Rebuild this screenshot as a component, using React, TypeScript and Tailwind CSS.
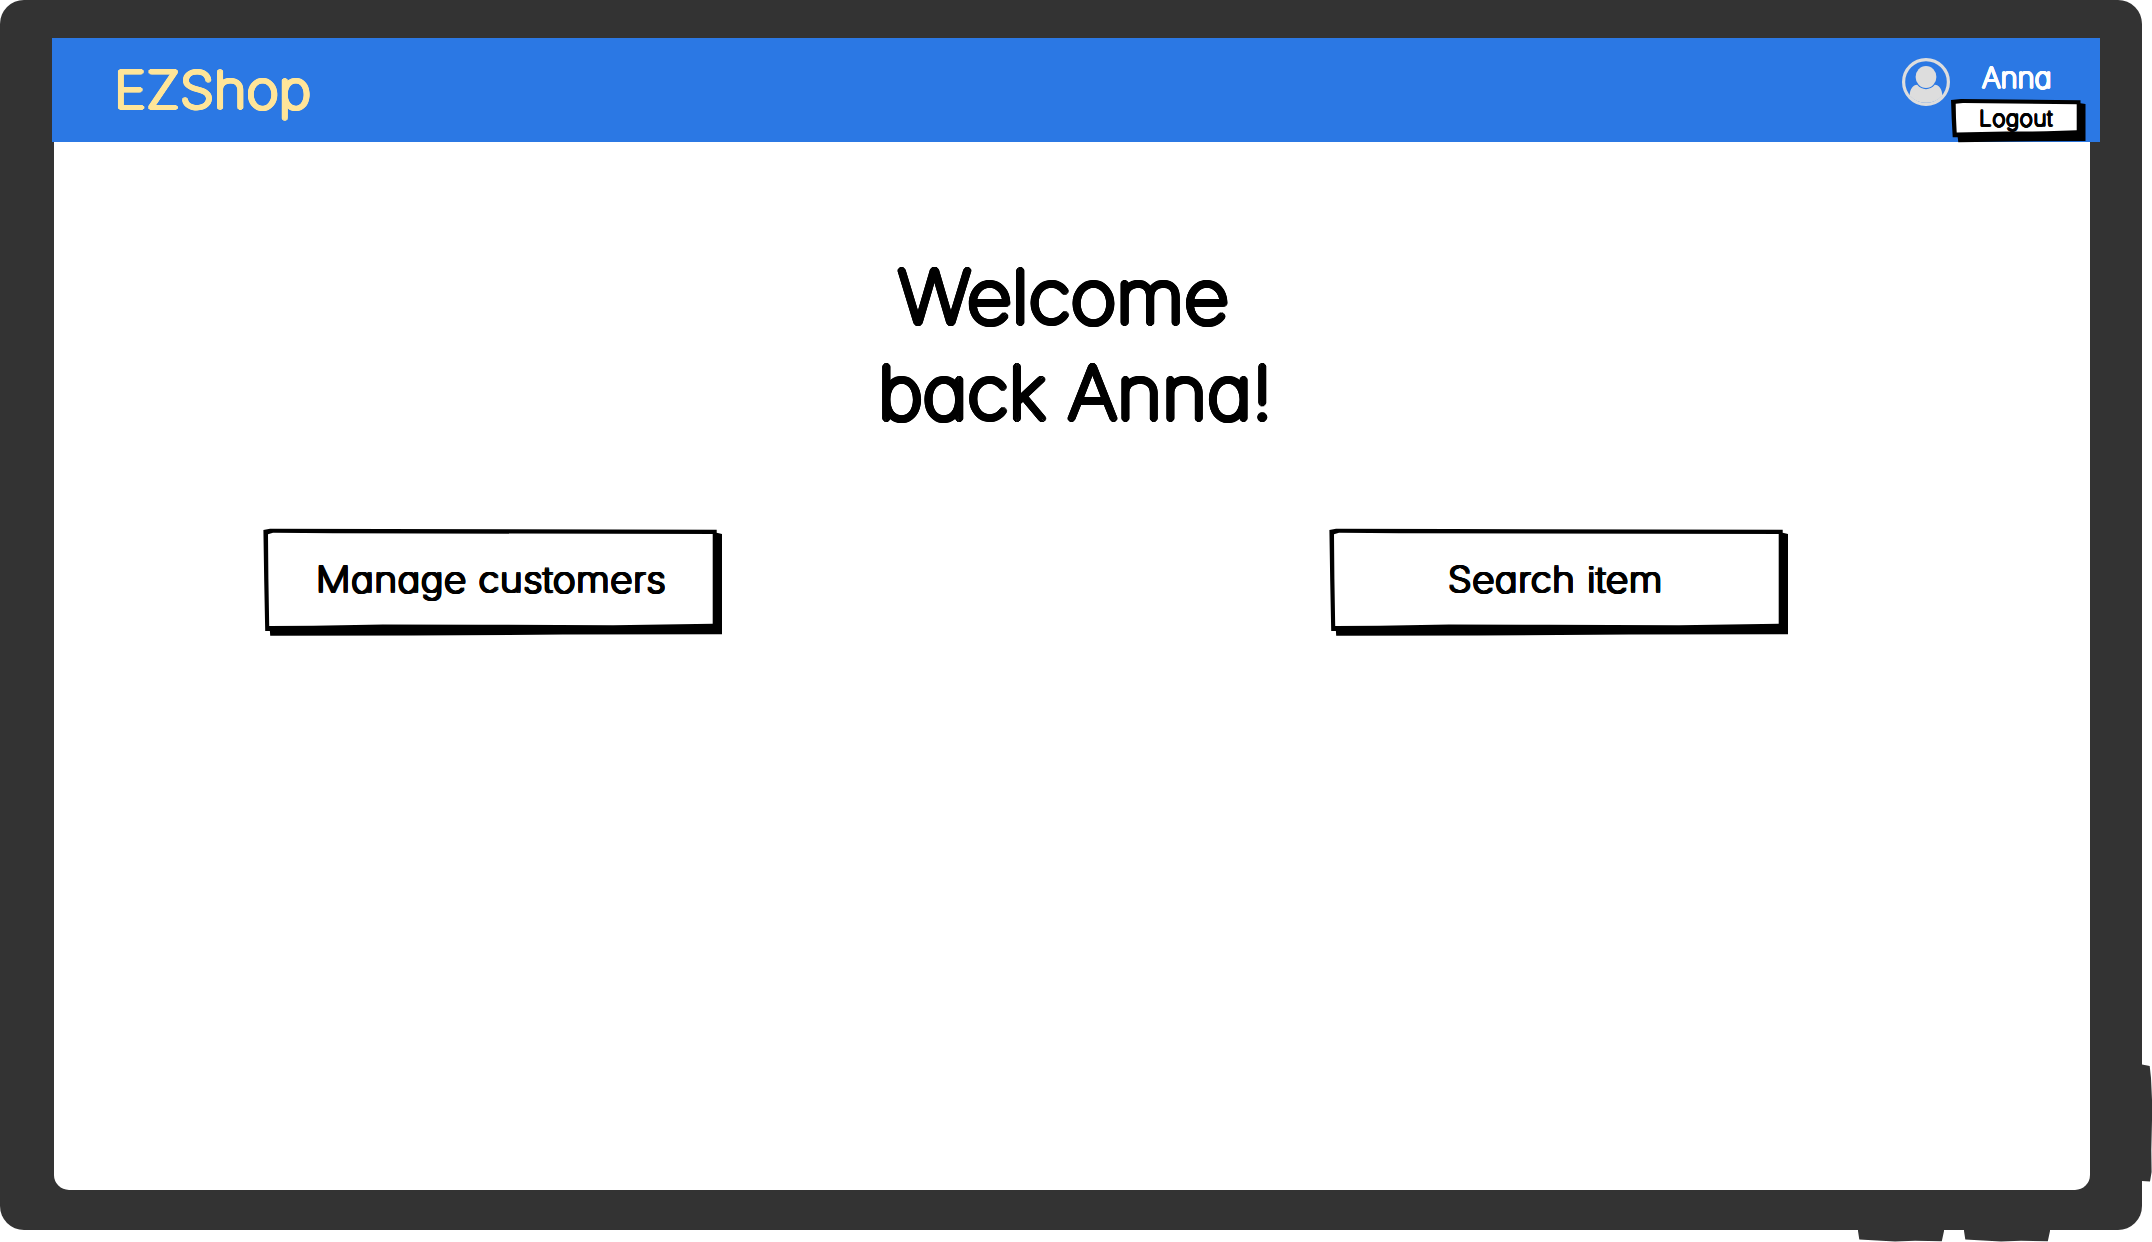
import type { ReactNode } from "react";

function Lettering({ className, children }: { className: string; children: ReactNode }) {
  return (
    <span
      className={
        "relative block origin-left whitespace-pre font-thin [font-feature-settings:'cv11'] [text-shadow:0.041em_0_currentColor,0.038em_0.015em_currentColor,0.029em_0.029em_currentColor,0.015em_0.038em_currentColor,0_0.041em_currentColor,-0.015em_0.038em_currentColor,-0.029em_0.029em_currentColor,-0.038em_0.015em_currentColor,-0.041em_0_currentColor,-0.038em_-0.015em_currentColor,-0.029em_-0.029em_currentColor,-0.015em_-0.038em_currentColor,0_-0.041em_currentColor,0.015em_-0.038em_currentColor,0.029em_-0.029em_currentColor,0.038em_-0.015em_currentColor] " +
        className
      }
    >
      {children}
    </span>
  );
}

function SketchButton({ className, children }: { className: string; children: ReactNode }) {
  return (
    <button className={"relative block h-[107px] w-[459px] text-left " + className}>
      <svg className="absolute inset-0 h-full w-full overflow-visible" viewBox="0 0 459 107">
        <path
          d="M.4 1 7-.2 120 0 453.7.8V3.7L459 5V105.3L300 105.6 150 106.6 7.2 106.8 6.9 102H2.2L1.2 52Z"
          fill="#000"
        />
        <path d="M5 5.2 10 3.7 70 4.3 449.7 5V94.8L350 96.3 220 95.7 120 95.5 50 96.7 6.2 97 5.4 50Z" fill="#fff" />
      </svg>
      {children}
    </button>
  );
}

function Avatar() {
  return (
    <svg className="mt-5 h-12 w-12 shrink-0" viewBox="0 0 48 48">
      <circle cx="24" cy="24" r="22.4" fill="none" stroke="#ddd" strokeWidth="3.2" />
      <ellipse cx="24" cy="19" rx="10.4" ry="11" fill="#ddd" />
      <path
        d="M7.6 37.5C8 31 11 27 15.2 26.8C20 32.6 28 32.6 32.8 26.8C37 27 40 31 40.4 37.5A22 22 0 0 1 7.6 37.5Z"
        fill="#ddd"
      />
    </svg>
  );
}

function Header() {
  return (
    <header className="relative -mr-2.5 -ml-0.5 flex h-[104px] items-start bg-[#2b78e4]">
      <Lettering className="ml-[61.5px] scale-x-[1.1] text-[50px] leading-[104px] tracking-[0.3px] text-[#ffe599]">
        EZShop
      </Lettering>
      <div className="mr-[9px] ml-auto flex">
        <Avatar />
        <div className="ml-[1.3px] w-[140px] pt-6">
          <Lettering className="ml-[30.7px] scale-x-[1.04] text-[28px] leading-8 text-white">Anna</Lettering>
          <button className="relative mt-[4.7px] block h-[43px] w-[135px] text-left text-black">
            <svg className="absolute inset-0 h-full w-full overflow-visible" viewBox="0 0 135 43">
              <path d="M0 1 10 0 129.5 1.2V4.2L134.5 5V42L60 42.5 7.3 43.2 6.7 38.3H1.7L.7 20Z" fill="#000" />
              <path d="M4.7 4.8 12 4 125.7 5.3V31.2L95 32.3 55 32.6 30 33 5.7 33.4 5 19Z" fill="#fff" />
            </svg>
            <Lettering className="-mt-[3px] ml-[28px] scale-x-[1.08] text-[21px] leading-[42px] tracking-[0.5px]">
              Logout
            </Lettering>
          </button>
        </div>
      </div>
    </header>
  );
}

export default function App() {
  return (
    <div className="relative h-[1242px] w-[2152px] overflow-hidden bg-white font-[Inter,sans-serif] text-black">
      <svg className="absolute inset-0 h-full w-full" viewBox="0 0 2152 1242" fill="#333">
        <path d="M1858 1226V1231L1859.3 1239.6 1877 1240.5 1895 1241.6 1915 1240.7 1941.8 1241.3 1944 1231V1226Z" />
        <path d="M1964 1226V1231L1965.3 1239.6 1983 1240.5 2001 1241.6 2021 1240.7 2047.8 1241.3 2050 1231V1226Z" />
        <path d="M2138 1064 2142 1064.5 2149.7 1066 2151 1078 2152 1100V1120L2151.3 1150 2151.6 1172 2150 1181.5 2138 1180.8Z" />
      </svg>
      <div className="relative h-[1230px] w-[2142px] rounded-[24px] bg-[#333] pt-[38px] pr-[52px] pb-10 pl-[54px]">
        <div className="h-[1152px] w-[2036px] rounded-b-[15px] bg-white">
          <Header />
          <main>
            <h1 className="flex flex-col items-start pt-[107px]">
              <Lettering className="ml-[844px] scale-x-[1.075] text-[73px] leading-24">Welcome</Lettering>
              <Lettering className="ml-[824px] scale-x-[1.055] text-[73px] leading-24">back Anna!</Lettering>
            </h1>
            <div className="mt-[88px] flex pl-[209px]">
              <SketchButton className="">
                <Lettering className="-mt-[7px] ml-[53px] scale-x-[1.1] text-[35px] leading-[107px] tracking-[0.75px]">
                  Manage customers
                </Lettering>
              </SketchButton>
              <SketchButton className="ml-[607px]">
                <Lettering className="-mt-[7px] ml-[118.5px] scale-x-[1.1] text-[35px] leading-[107px] tracking-[0.7px]">
                  Search item
                </Lettering>
              </SketchButton>
            </div>
          </main>
        </div>
      </div>
    </div>
  );
}
